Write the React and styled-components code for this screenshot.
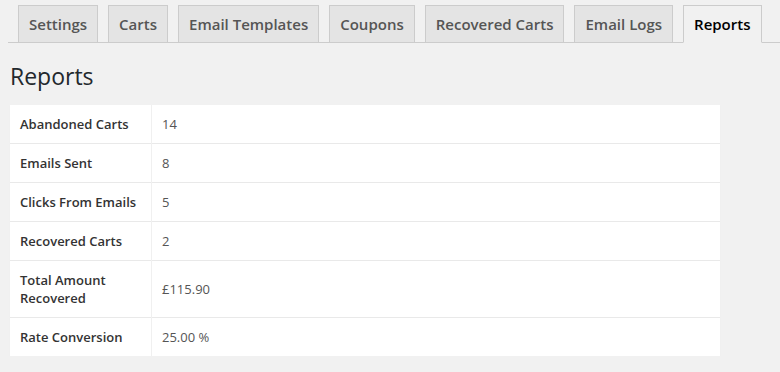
import React from 'react';
import { styled, createGlobalStyle } from 'styled-components';

const GlobalStyle = createGlobalStyle`
  html, body {
    margin: 0;
    padding: 0;
    background: #f1f1f1;
    font-family: 'Open Sans', 'Liberation Sans', sans-serif;
    color: #444;
  }
`;

const Page = styled.div`
  padding: 5px 0 0 10px;
`;

const TabBar = styled.nav`
  display: flex;
  gap: 10px;
  margin-left: -2px;
  padding-left: 10px;
  border-bottom: 1px solid #ccc;
  height: 37px;
`;

const Tab = styled.a`
  display: block;
  box-sizing: border-box;
  height: ${(p) => (p.$active ? '38px' : '37px')};
  padding: 0 10px;
  line-height: 36px;
  font-size: 15px;
  font-weight: 600;
  color: ${(p) => (p.$active ? '#000' : '#555')};
  background: ${(p) => (p.$active ? '#f1f1f1' : '#e4e4e4')};
  border: 1px solid #ccc;
  border-bottom: ${(p) => (p.$active ? '1px solid #f1f1f1' : 'none')};
  text-decoration: none;
  white-space: nowrap;
`;

const Title = styled.h1`
  margin: 0;
  padding: 18px 0 14px;
  font-size: 23px;
  font-weight: 400;
  line-height: 30px;
  color: #23282d;
`;

const Table = styled.table`
  width: 710px;
  border-collapse: collapse;
  background: #fff;
  box-shadow: 0 1px 1px rgba(0, 0, 0, 0.04);
`;

const Row = styled.tr`
  & + & {
    border-top: 1px solid #e9e9e9;
  }
`;

const Label = styled.th`
  width: 121px;
  padding: 10px 10px;
  text-align: left;
  vertical-align: middle;
  font-size: 13px;
  font-weight: 600;
  line-height: 18px;
  color: #333;
  border-right: 1px solid #f0f0f0;
`;

const Value = styled.td`
  padding: 10px 10px;
  font-size: 13px;
  line-height: 18px;
  color: #555;
`;

const tabs = ['Settings', 'Carts', 'Email Templates', 'Coupons', 'Recovered Carts', 'Email Logs', 'Reports'];

const rows = [
  ['Abandoned Carts', '14'],
  ['Emails Sent', '8'],
  ['Clicks From Emails', '5'],
  ['Recovered Carts', '2'],
  ['Total Amount Recovered', '£115.90'],
  ['Rate Conversion', '25.00 %'],
];

const App = () => {
  return (
    <>
      <GlobalStyle />
      <Page>
        <TabBar>
          {tabs.map((t) => (
            <Tab key={t} href='#' $active={t === 'Reports'}>
              {t}
            </Tab>
          ))}
        </TabBar>
        <Title>Reports</Title>
        <Table>
          <tbody>
            {rows.map(([label, value]) => (
              <Row key={label}>
                <Label>{label}</Label>
                <Value>{value}</Value>
              </Row>
            ))}
          </tbody>
        </Table>
      </Page>
    </>
  );
};

export default App;
